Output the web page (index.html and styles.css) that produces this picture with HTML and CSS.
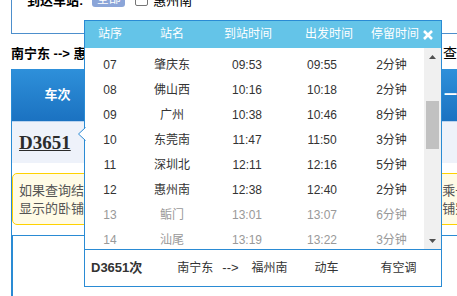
FILE: index.html
```html
<!DOCTYPE html>
<html lang="zh-CN">

<head>
    <meta charset="UTF-8">
    <meta name="viewport" content="width=device-width, initial-scale=1.0">
    <title>车次停靠站</title>
    <link rel="stylesheet" href="styles.css">
</head>

<body>
    <div class="page">
        <div class="filter">
            <span class="filter-label">到达车站:</span>
            <span class="tag">全部</span>
            <span class="check"></span>
            <span class="station">惠州南</span>
        </div>

        <div class="route">
            <span class="route-name">南宁东 --&gt; 惠州南</span>
            <span class="route-link">查看停靠站</span>
        </div>

        <div class="result">
            <div class="thead">
                <div class="th th-train">车次</div>
                <div class="th th-station">出发站</div>
                <div class="th th-time">出发时间</div>
                <div class="th th-dur">历时</div>
                <div class="th th-seat">一等座</div>
            </div>
            <div class="train-row">
                <a class="train-no">D3651</a>
            </div>
            <div class="notice">
                如果查询结果中没有您所需的车次, 建议您选择其他日期的车次或经中转换乘一次或多次<br>
                显示的卧铺票价均为上铺票价, 具体票价请以您在确认支付时实际所购买的铺别票价为准。
            </div>
        </div>

        <div class="more"></div>
    </div>

    <div class="stops">
        <svg class="stops-arrow" width="8" height="14" viewBox="0 0 8 14">
            <polygon points="8,0 0.5,7 8,14" fill="#fff" />
            <polyline points="7.5,0.5 0.5,7 7.5,13.5" fill="none" stroke="#2a8bd4" stroke-width="1" />
        </svg>

        <div class="stops-head">
            <span>站序</span>
            <span>站名</span>
            <span>到站时间</span>
            <span>出发时间</span>
            <span>停留时间</span>
            <span class="close">
                <svg width="10" height="10" viewBox="0 0 10 10">
                    <path d="M1 1 L9 9 M9 1 L1 9" stroke="#fff" stroke-width="2.6" />
                </svg>
            </span>
        </div>

        <div class="stops-body">
            <div class="stops-list">
                <div class="stop"><span>07</span><span>肇庆东</span><span>09:53</span><span>09:55</span><span>2分钟</span></div>
                <div class="stop"><span>08</span><span>佛山西</span><span>10:16</span><span>10:18</span><span>2分钟</span></div>
                <div class="stop"><span>09</span><span>广州</span><span>10:38</span><span>10:46</span><span>8分钟</span></div>
                <div class="stop"><span>10</span><span>东莞南</span><span>11:47</span><span>11:50</span><span>3分钟</span></div>
                <div class="stop"><span>11</span><span>深圳北</span><span>12:11</span><span>12:16</span><span>5分钟</span></div>
                <div class="stop"><span>12</span><span>惠州南</span><span>12:38</span><span>12:40</span><span>2分钟</span></div>
                <div class="stop pass"><span>13</span><span>鲘门</span><span>13:01</span><span>13:07</span><span>6分钟</span></div>
                <div class="stop pass"><span>14</span><span>汕尾</span><span>13:19</span><span>13:22</span><span>3分钟</span></div>
            </div>
            <div class="scrollbar">
                <div class="scroll-btn">
                    <svg width="7" height="4" viewBox="0 0 7 4"><polygon points="3.5,0 7,4 0,4" fill="#505050" /></svg>
                </div>
                <div class="scroll-thumb"></div>
                <div class="scroll-btn scroll-btn-down">
                    <svg width="7" height="4" viewBox="0 0 7 4"><polygon points="0,0 7,0 3.5,4" fill="#505050" /></svg>
                </div>
            </div>
        </div>

        <div class="stops-foot">
            <span class="foot-train">D3651次</span>
            <span class="foot-from">南宁东</span>
            <span class="foot-arrow">--&gt;</span>
            <span class="foot-to">福州南</span>
            <span class="foot-type">动车</span>
            <span class="foot-ac">有空调</span>
        </div>
    </div>
</body>

</html>
```

FILE: styles.css
```css
html,
body {
    margin: 0;
    padding: 0;
    overflow: hidden;
    background-color: #fff;
}

body {
    font-family: 'Liberation Sans', 'Noto Sans CJK SC', sans-serif;
    font-size: 12px;
    color: #333;
    position: relative;
    height: 296px;
}

.page {
    margin-left: 11px;
    width: 502px;
}

/* filter box, scrolled partly out of view */
.filter {
    margin-top: -12px;
    height: 20px;
    padding: 0 15px 24px;
    border: 1px solid #4d8fcc;
    display: flex;
    align-items: center;
}

.filter-label {
    font-size: 13px;
    font-weight: 700;
    color: #000;
}

.tag {
    margin-left: 9px;
    width: 33px;
    height: 15px;
    line-height: 15px;
    text-align: center;
    background-color: #8ba5d8;
    color: #fff;
    border-radius: 3px;
}

.check {
    margin-left: 10px;
    width: 11px;
    height: 11px;
    border: 1px solid #767676;
    border-radius: 2px;
    background: #fff;
}

.station {
    margin-left: 5px;
    font-size: 13px;
    color: #000;
}

.route {
    margin-top: 8px;
    height: 20px;
    display: flex;
    align-items: center;
    justify-content: space-between;
    white-space: nowrap;
}

.route-name {
    font-size: 13px;
    font-weight: 700;
    color: #000;
}

.route-link {
    font-size: 14px;
    color: #000;
}

/* result table */
.result {
    margin-top: 7px;
    border: 1px solid #2a8bd4;
    border-top: none;
    padding-bottom: 10px;
}

.thead {
    display: flex;
    height: 52px;
    line-height: 52px;
    background: linear-gradient(#2e90da, #1b72c1);
    border-bottom: 1px solid #b9d3ef;
    color: #fff;
    font-size: 13px;
    font-weight: 700;
    white-space: nowrap;
}

.th {
    text-align: center;
    flex-shrink: 0;
}

.th-train {
    width: 91px;
}

.th-station {
    width: 110px;
}

.th-time {
    width: 120px;
}

.th-dur {
    width: 111px;
}

.th-seat {
    text-align: left;
}

.train-row {
    height: 41px;
    line-height: 41px;
    background-color: #eef2fa;
    padding-left: 7px;
}

.train-no {
    font-family: 'Liberation Serif', serif;
    font-size: 19px;
    font-weight: 700;
    color: #2b2b2b;
    text-decoration: underline;
}

.notice {
    margin-top: 10px;
    padding: 8px 6px 6px;
    border: 1px solid #ffd200;
    border-radius: 5px;
    background-color: #fffbe6;
    color: #555;
    font-size: 13px;
    line-height: 18px;
    white-space: nowrap;
    overflow: hidden;
}

.more {
    height: 70px;
    border-left: 2px solid #2a8bd4;
}

/* stop list popup */
.stops {
    position: absolute;
    left: 84px;
    top: 20px;
    width: 356px;
    border: 1px solid #2a8bd4;
    background-color: #fff;
}

.stops-arrow {
    position: absolute;
    left: -7px;
    top: 106px;
}

.stops-head {
    display: grid;
    grid-template-columns: 50px 74px 78px 84px 44px 26px;
    height: 27px;
    line-height: 27px;
    background-color: #64c4e8;
    color: #fff;
    text-align: center;
    white-space: nowrap;
}

.close {
    display: flex;
    align-items: center;
    justify-content: center;
}

.stops-body {
    display: flex;
    height: 201px;
}

.stops-list {
    flex: 1;
    overflow: hidden;
    padding-top: 5px;
}

.stop {
    display: grid;
    grid-template-columns: 50px 74px 76px 74px 65px;
    height: 25px;
    line-height: 25px;
    text-align: center;
    color: #333;
}

.stop.pass {
    color: #999;
}

.scrollbar {
    width: 17px;
    background-color: #f0f0f0;
    display: flex;
    flex-direction: column;
}

.scroll-btn {
    height: 17px;
    display: flex;
    align-items: center;
    justify-content: center;
}

.scroll-btn-down {
    margin-top: auto;
}

.scroll-thumb {
    margin: 36px 2px 0;
    height: 48px;
    background-color: #c1c1c1;
}

.stops-foot {
    display: flex;
    height: 36px;
    line-height: 36px;
    border-top: 1px solid #2a8bd4;
    padding-left: 6px;
    white-space: nowrap;
}

.foot-train {
    font-size: 13px;
    font-weight: 700;
}

.foot-from {
    margin-left: 35px;
}

.foot-arrow {
    margin-left: 9px;
    font-size: 13px;
}

.foot-to {
    margin-left: 13px;
}

.foot-type {
    margin-left: 27px;
}

.foot-ac {
    margin-left: 42px;
}
```
